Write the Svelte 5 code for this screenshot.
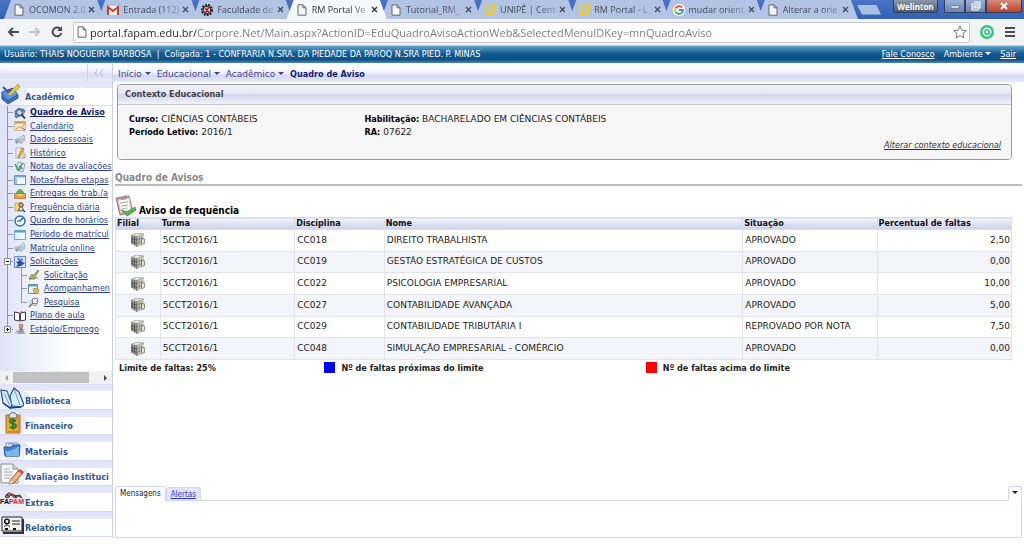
<script lang="ts">
	interface BrowserTab {
		icon: string;
		title: string;
	}

	interface MenuItem {
		icon: string;
		label: string;
		child?: boolean;
		last?: boolean;
		toggle?: 'open' | 'closed';
	}

	interface Row {
		turma: string;
		disciplina: string;
		nome: string;
		situacao: string;
		faltas: string;
	}

	const tabs: BrowserTab[] = [
		{ icon: 'page', title: 'OCOMON 2.0' },
		{ icon: 'gmail', title: 'Entrada (112)' },
		{ icon: 'gear', title: 'Faculdade de' },
		{ icon: 'page', title: 'RM Portal Ve' },
		{ icon: 'page', title: 'Tutorial_RM_' },
		{ icon: 'unipe', title: 'UNIPÊ | Cent' },
		{ icon: 'unipe', title: 'RM Portal - L' },
		{ icon: 'google', title: 'mudar orient' },
		{ icon: 'page', title: 'Alterar a orie' }
	];

	const menu: MenuItem[] = [
		{ icon: 'board', label: 'Quadro de Aviso' },
		{ icon: 'calendar', label: 'Calendário' },
		{ icon: 'people', label: 'Dados pessoais' },
		{ icon: 'history', label: 'Histórico' },
		{ icon: 'grades', label: 'Notas de avaliações' },
		{ icon: 'sheet', label: 'Notas/faltas etapas' },
		{ icon: 'tray', label: 'Entregas de trab./a' },
		{ icon: 'daily', label: 'Frequência diária' },
		{ icon: 'clock', label: 'Quadro de horários' },
		{ icon: 'window', label: 'Período de matrícul' },
		{ icon: 'people', label: 'Matrícula online' },
		{ icon: 'requests', label: 'Solicitações', toggle: 'open' },
		{ icon: 'pencil', label: 'Solicitação', child: true },
		{ icon: 'follow', label: 'Acompanhamen', child: true },
		{ icon: 'search', label: 'Pesquisa', child: true, last: true },
		{ icon: 'book', label: 'Plano de aula' },
		{ icon: 'person', label: 'Estágio/Emprego', toggle: 'closed', last: true }
	];

	const sections = [
		{ icon: 'library', label: 'Biblioteca' },
		{ icon: 'money', label: 'Financeiro' },
		{ icon: 'folder', label: 'Materiais' },
		{ icon: 'notes', label: 'Avaliação Instituci' },
		{ icon: 'fapam', label: 'Extras' },
		{ icon: 'report', label: 'Relatórios' }
	];

	const columns = ['Filial', 'Turma', 'Disciplina', 'Nome', 'Situação', 'Percentual de faltas'];

	const rows: Row[] = [
		{ turma: '5CCT2016/1', disciplina: 'CC018', nome: 'DIREITO TRABALHISTA', situacao: 'APROVADO', faltas: '2,50' },
		{ turma: '5CCT2016/1', disciplina: 'CC019', nome: 'GESTÃO ESTRATÉGICA DE CUSTOS', situacao: 'APROVADO', faltas: '0,00' },
		{ turma: '5CCT2016/1', disciplina: 'CC022', nome: 'PSICOLOGIA EMPRESARIAL', situacao: 'APROVADO', faltas: '10,00' },
		{ turma: '5CCT2016/1', disciplina: 'CC027', nome: 'CONTABILIDADE AVANÇADA', situacao: 'APROVADO', faltas: '5,00' },
		{ turma: '5CCT2016/1', disciplina: 'CC029', nome: 'CONTABILIDADE TRIBUTÁRIA I', situacao: 'REPROVADO POR NOTA', faltas: '7,50' },
		{ turma: '5CCT2016/1', disciplina: 'CC048', nome: 'SIMULAÇÃO EMPRESARIAL - COMÉRCIO', situacao: 'APROVADO', faltas: '0,00' }
	];

	// small icons, drawn on a 12x12 grid
	const small: Record<string, string> = {
		page: '<path d="M2 .8h5l3 3v7.4H2z" fill="#f4f6fa" stroke="#666" stroke-width="1"/><path d="M7 .8v3h3" fill="none" stroke="#666"/>',
		gmail: '<path d="M0 2h12v9H0z" fill="#f3f3f3"/><path d="M1 11V3l5 4 5-4v8" fill="none" stroke="#d23a31" stroke-width="2"/>',
		gear: '<circle cx="6" cy="6" r="5" fill="none" stroke="#222" stroke-width="2" stroke-dasharray="2 1"/><circle cx="6" cy="6" r="3.6" fill="#ddd" stroke="#222"/><path d="M4 9l2-3-2-2M6 6l2-3M6 6l2 3" stroke="#b52634" stroke-width="1.5" fill="none"/>',
		unipe: '<path d="M1 0h3v6q0 3 2 3t2-3V0h3v7q0 5-5 5T1 7z" fill="#e8cc38"/>',
		google: '<circle cx="6" cy="6" r="6" fill="#fff"/><path d="M9 3.5A4 4 0 0 0 2.6 4" stroke="#e94335" stroke-width="1.8" fill="none"/><path d="M2.6 4a4 4 0 0 0 0 4" stroke="#fbbc05" stroke-width="1.8" fill="none"/><path d="M2.6 8A4 4 0 0 0 8.6 9" stroke="#34a853" stroke-width="1.8" fill="none"/><path d="M6 6h4q0 2-1.4 3" stroke="#4285f4" stroke-width="1.8" fill="none"/>',
		board: '<path d="M1 4l4-3 5 2-1 5-5 2-3-2z" fill="#5c97c9" stroke="#31557f" stroke-width=".6"/><circle cx="5.5" cy="5.5" r="2.8" fill="#c8e4f4" stroke="#3c4650"/><path d="M7.5 7.5l3.5 4" stroke="#27323c" stroke-width="1.8"/><path d="M9 2l2 3M1 9l2 2" stroke="#3478a8" stroke-width="1.4"/><circle cx="9.7" cy="5.5" r="1.2" fill="#c88c58"/>',
		calendar: '<path d="M.5 1.5h11v9H.5z" fill="#f3e8ce" stroke="#bba984" stroke-width=".8"/><path d="M1 2.5h10" stroke="#d29757" stroke-width="2"/><path d="M2 9l3-2 2 1 4-4" stroke="#e0903d" fill="none"/><path d="M8 8l3 2" stroke="#c95443"/>',
		people: '<ellipse cx="3.5" cy="6.5" rx="3" ry="2.4" fill="#b5bdcb"/><circle cx="3" cy="8" r="1.5" fill="#8c99ad"/><path d="M5 4l5-3 1 5-4 4z" fill="#dce2ed" stroke="#99a4b5" stroke-width=".8"/><path d="M6 6l3-2M7 8l3-3" stroke="#7995bd" stroke-width=".8"/>',
		history: '<path d="M2 1h7v10H2z" fill="#fff" stroke="#8c9cbd" stroke-width=".8"/><path d="M3 4h4M3 8h5" stroke="#a9b9d7" stroke-width=".7"/><path d="M4 9l4-8 2 1-4 8-2 1z" fill="#efb72d" stroke="#9b6724" stroke-width=".6"/><path d="M9 11h2V6" stroke="#d28c4f" fill="none"/>',
		grades: '<path d="M4 1l7 2-2 8-6-2z" fill="#e5ecf5" stroke="#70889b" stroke-width=".7"/><path d="M1 3l3 6 5-7" stroke="#48a765" stroke-width="1.5" fill="none"/><path d="M5 5l3 2M5 9l4-2" stroke="#395c7f" stroke-width=".8"/>',
		sheet: '<path d="M.5 1.5h11v9H.5z" fill="#fff" stroke="#6690c0"/><path d="M1 2.5h10" stroke="#72aae1" stroke-width="2"/><path d="M2 4v6" stroke="#5783c9"/><path d="M4 4v6M7 4v6M9 4v6" stroke="#d3deed" stroke-width=".7"/>',
		tray: '<path d="M3 3q3-4 6 0l2 3H1z" fill="#66ad57"/><path d="M.5 5.5h11v5H.5z" fill="#e6a33d" stroke="#a36b2c" stroke-width=".7"/><path d="M3 7h6" stroke="#fff0bd"/>',
		daily: '<path d="M1 2h6v8H1z" fill="#f9dd61" stroke="#a3862f" stroke-width=".6"/><circle cx="7" cy="4" r="2.2" fill="#e2ac80" stroke="#7d392e"/><path d="M3 10q4-6 7 0" fill="#b95349"/><circle cx="7" cy="8" r="2" fill="#d4edf9" stroke="#58657d"/><path d="M9 9l2 2" stroke="#444" stroke-width="1.5"/>',
		clock: '<circle cx="6" cy="6" r="5" fill="#eaf8ff" stroke="#2b6fae" stroke-width="1.4"/><path d="M6 6l3-3M6 6H3" stroke="#183e73" stroke-width="1.2"/><path d="M6 1v1M11 6h-1M6 11v-1" stroke="#437daa"/>',
		window: '<path d="M.5 1.5h11v9H.5z" fill="#edf9ff" stroke="#70a8d0"/><path d="M1 2.5h10" stroke="#41a4d8" stroke-width="2"/><path d="M8 3h3" stroke="#ef9f58"/><path d="M3 5v5M6 5v5" stroke="#d5eafa"/>',
		requests: '<path d="M.5.5h11v11H.5z" fill="#dce8ff" stroke="#6185e4"/><path d="M3 2l6 1-1 3 3 1-4 3-5 1 2-3-2-2 3-1z" fill="#244ab5"/><path d="M5 3l3 2" stroke="#fff" stroke-width=".8"/>',
		pencil: '<path d="M1 10l3-5 1 2 5-6 1 1-5 7z" fill="#b2ba64" stroke="#6c7039" stroke-width=".7"/><path d="M1 10h6l1-2 2 2" stroke="#769648" fill="none"/>',
		follow: '<path d="M.5 1.5h9v9h-9z" fill="#f8fbff" stroke="#678eb9"/><path d="M1 2.5h8" stroke="#5f96cf" stroke-width="2"/><path d="M5 6l3-1 3 2-1 4-4-1z" fill="#e3bc4c" stroke="#877244" stroke-width=".6"/>',
		search: '<path d="M1 8l4-5 5 1-2 6z" fill="#eff0e7" stroke="#94958b" stroke-width=".6"/><circle cx="7" cy="5" r="3" fill="#eaf2f7" stroke="#6b756f"/><path d="M5 7l-4 4" stroke="#777b65" stroke-width="1.5"/>',
		book: '<path d="M.5 2l5 1v8l-5-1zM11.5 2l-5 1v8l5-1z" fill="#fff" stroke="#333b48"/><path d="M6 3v8" stroke="#a53c3c"/><path d="M4 2l2 2 2-3" stroke="#ad4242" fill="none"/>',
		person: '<circle cx="7" cy="3" r="2" fill="#d6a57b" stroke="#77523c" stroke-width=".6"/><path d="M4 11l1-6h4l2 6z" fill="#a0a7b5"/><path d="M1 10l3-3v4" fill="#c6cbd4" stroke="#858b99" stroke-width=".6"/><path d="M7 5v4" stroke="#b13b3b"/>',
		building: '<path d="M0 2l5 1v9l-5-3z" fill="#9b9f9a"/><path d="M5 3l6-2v8l-6 3z" fill="#d2cfc0"/><path d="M0 2l5-2 6 1-6 2z" fill="#e6e7e1" stroke="#777a72" stroke-width=".5"/><path d="M1 3v6M3 3v7M5 3v9M0 5l5 1M0 7l5 2" stroke="#4a504c" stroke-width=".7"/><path d="M7 3v8M9 3v6M5 6l5-2M5 9l5-2" stroke="#76776d" stroke-width=".6"/><path d="M9 5h2.500v4L9 10z" fill="#eee9d4" stroke="#5a5d57" stroke-width=".6"/>'
	};

	// section icons, drawn on a 24x22 grid
	const large: Record<string, string> = {
		academic: '<path d="M2 9l11-4 5 7-10 7-6-5z" fill="#4c82d3" stroke="#2450a0"/><path d="M2 13l6 5 10-6v3L8 21l-6-5z" fill="#3f6cc0" stroke="#315eaf"/><path d="M3 9l10-3 4 5-9 5z" fill="#5f96e4"/><path d="M8 11L18 1l2 3L10 13z" fill="#f2c52c" stroke="#a78424" stroke-width=".6"/><path d="M3 4l5 5 3-2" fill="none" stroke="#3258a5" stroke-width="2"/>',
		library: '<path d="M1 3l6 1 5 14-2 3L3 16zM14 1l5 4 5 13-3 2-9-1-2-10z" fill="#d9ecfb" stroke="#1f4e91" stroke-width="1.2"/><path d="M7 5l5 13M14 2l6 16M4 6l6 13" stroke="#6b9ed0" fill="none"/><path d="M3 16l7 5 11-1" fill="none" stroke="#173d7a" stroke-width="1.5"/>',
		money: '<path d="M6 3h14v18H6z" fill="#f0a52c" stroke="#a87123"/><path d="M9 3q4-5 8 0v3H9z" fill="#dce3ee" stroke="#59677c"/><path d="M18 5h2v16H8v-2h10z" fill="#d98724"/><path d="M16 9q-6-3-6 0 0 2 3 2.5t3 2.5q0 3-6 1M13 6.5v11" fill="none" stroke="#267b35" stroke-width="2"/>',
		folder: '<path d="M6 5h11l2 2v11H6z" fill="#f6f9ff" stroke="#7690bd"/><path d="M4 9h7l2-2h7l-1 11H5z" fill="#3f82d4" stroke="#20559c"/><path d="M5 13q7 1 14-5v10H6z" fill="#79b7ed"/><path d="M8 6h6" stroke="#558bc8"/>',
		notes: '<path d="M1 1h12l5 5v14H1z" fill="#f7f8f8" stroke="#888"/><path d="M13 1v5h5" fill="#ddd" stroke="#888"/><path d="M4 6h6M4 9h9M4 12h8M4 15h6" stroke="#a4a8ac"/><path d="M11 16L19 7l4 3-9 10-5 1z" fill="#eeb687" stroke="#8a533a"/><path d="M18 8l2-2 4 3-2 2z" fill="#ce4945"/><path d="M9 21l2-4 2 3z" fill="#f9e1bb"/>',
		report: '<path d="M2 3h20v14H2z" fill="#f2f2f2" stroke="#222"/><path d="M3 19h20V5" fill="none" stroke="#333" stroke-width="2"/><circle cx="7" cy="7.5" r="2.2" fill="#fff" stroke="#111" stroke-width="1.5"/><path d="M4 13q3-4 6 0M12 7h8M12 10h8" stroke="#222" fill="none"/><path d="M5 15h3M13 15h3" stroke="#111" stroke-width="2"/>'
	};

	let address = $state(
		'portal.fapam.edu.br/Corpore.Net/Main.aspx?ActionID=EduQuadroAvisoActionWeb&SelectedMenuIDKey=mnQuadroAviso'
	);
	let activeTab = $state(3);
	let panel = $state('Mensagens');
</script>

{#snippet smallIcon(name: string)}
	<svg class="icon" viewBox="0 0 12 12" aria-hidden="true">{@html small[name]}</svg>
{/snippet}

{#snippet largeIcon(name: string)}
	<svg class="icon-large" viewBox="0 0 24 22" aria-hidden="true">
		{#if name === 'fapam'}
			<path d="M5 8q3-6 7-3t8 1l2 3-4-2-3 2-4-3-3 3z" fill="#a77" stroke="#5d3431" />
			<path d="M6 5l4 3M13 5l4 4" stroke="#333" />
			<text x="0" y="15" class="logo-text">FA<tspan fill="#d22b35">PAM</tspan></text>
		{:else}
			{@html large[name]}
		{/if}
	</svg>
{/snippet}

<div class="page">
	<header class="browser">
		<div class="tab-strip">
			<div class="tabs">
				{#each tabs as tab, i}
					<div class="tab" class:active={i === activeTab}>
						<button class="tab-title" onclick={() => (activeTab = i)}>
							{@render smallIcon(tab.icon)}
							<span>{tab.title}</span>
						</button>
						<button class="tab-close" aria-label="Fechar guia">
							<svg viewBox="0 0 7 7"><path d="M1 1l5 5M6 1L1 6" stroke="currentColor" stroke-width="1.3" /></svg>
						</button>
					</div>
				{/each}
			</div>
			<button class="new-tab" aria-label="Nova guia"></button>
			<div class="window-controls">
				<button class="user">Welinton</button>
				<div class="window-buttons">
					<button aria-label="Minimizar"><svg viewBox="0 0 10 10"><path d="M1 5h8v2H1z" fill="#fff" stroke="#456" stroke-width=".5" /></svg></button>
					<button aria-label="Restaurar"><svg viewBox="0 0 10 10"><path d="M3 1h6v6H7M1 3h6v6H1zM3 5h2v2H3z" fill="none" stroke="#fff" stroke-width="1.2" /></svg></button>
					<button class="close" aria-label="Fechar"><svg viewBox="0 0 10 10"><path d="M2 2l6 6M8 2L2 8" stroke="#fff" stroke-width="2" /></svg></button>
				</div>
			</div>
		</div>

		<div class="toolbar">
			<button class="nav" aria-label="Voltar"><svg viewBox="0 0 12 12"><path d="M12 6H2M6 2L2 6l4 4" fill="none" stroke="#4c4c4c" stroke-width="2" /></svg></button>
			<button class="nav" aria-label="Avançar"><svg viewBox="0 0 12 12"><path d="M0 6h10M6 2l4 4-4 4" fill="none" stroke="#c6c6c6" stroke-width="2" /></svg></button>
			<button class="nav" aria-label="Recarregar"><svg viewBox="0 0 12 12"><path d="M10 4a4.4 4.4 0 1 0 .3 3" fill="none" stroke="#4c4c4c" stroke-width="2" /><path d="M11 0v5H6z" fill="#4c4c4c" /></svg></button>
			<div class="address">
				{@render smallIcon('page')}
				<input type="text" aria-label="Endereço" bind:value={address} />
				<button class="star" aria-label="Favoritos"><svg viewBox="0 0 14 14"><path d="M7 1l1.8 4.2 4.5.4-3.4 3 1 4.4L7 10.7 3.1 13l1-4.4-3.4-3 4.5-.4z" fill="none" stroke="#777" /></svg></button>
			</div>
			<button class="extension" aria-label="Extensão"><svg viewBox="0 0 14 14"><circle cx="7" cy="7" r="5.8" fill="#e9fff2" stroke="#36c37b" stroke-width="2.4" /><circle cx="7" cy="7" r="2.2" fill="none" stroke="#36c37b" stroke-width="1.5" /><path d="M9 5v4h2" stroke="#36c37b" fill="none" /></svg></button>
			<button class="nav" aria-label="Menu"><svg viewBox="0 0 12 12"><path d="M1 2h10M1 6h10M1 10h10" stroke="#4c4c4c" stroke-width="2" /></svg></button>
		</div>
	</header>

	<div class="user-bar">
		<span>Usuário: THAIS NOGUEIRA BARBOSA &nbsp;|&nbsp; Coligada: 1 - CONFRARIA N.SRA. DA PIEDADE DA PAROQ N.SRA PIED. P. MINAS</span>
		<nav>
			<a href="#contato">Fale Conosco</a>
			<button>Ambiente <i class="caret"></i></button>
			<a href="#sair">Sair</a>
		</nav>
	</div>

	<div class="body">
		<aside>
			<div class="collapse">
				<button aria-label="Recolher menu"><svg viewBox="0 0 10 8"><path d="M4 0L1 4l3 4M9 0L6 4l3 4" fill="none" stroke="#b9c2df" /></svg></button>
			</div>
			<h2 class="section">
				<a href="#academico">{@render largeIcon('academic')}<span>Acadêmico</span></a>
			</h2>
			<ul class="tree">
				{#each menu as item, i}
					<li>
						{#if item.child}
							<span class="guide through"></span>
						{/if}
						<span class="guide" class:end={item.last}>
							{#if item.toggle}
								<button class="toggle" aria-label={item.label}>
									<svg viewBox="0 0 7 7"><path d="M.5.5h6v6h-6z" fill="#fff" stroke="#8b8b94" /><path d={item.toggle === 'open' ? 'M2 3.5h3' : 'M2 3.5h3M3.5 2v3'} stroke="#000" /></svg>
								</button>
							{/if}
						</span>
						{@render smallIcon(item.icon)}
						<a href="#item-{i}" class:current={i === 0}>{item.label}</a>
					</li>
				{/each}
			</ul>
			<div class="scrollbar">
				<i class="arrow left"></i>
				<i class="thumb"></i>
				<i class="arrow right"></i>
			</div>
			<div class="sections">
				{#each sections as section}
					<h2 class="section">
						<a href="#{section.icon}">{@render largeIcon(section.icon)}<span>{section.label}</span></a>
					</h2>
				{/each}
			</div>
		</aside>

		<main>
			<nav class="breadcrumb">
				<a href="#inicio">Início <i class="caret"></i></a>
				<a href="#educacional">Educacional <i class="caret"></i></a>
				<a href="#academico">Acadêmico <i class="caret"></i></a>
				<b>Quadro de Aviso</b>
			</nav>

			<section class="context">
				<h3>Contexto Educacional</h3>
				<div class="context-body">
					<div class="fields">
						<p><b>Curso:</b> CIÊNCIAS CONTÁBEIS</p>
						<p><b>Habilitação:</b> BACHARELADO EM CIÊNCIAS CONTÁBEIS</p>
						<p><b>Período Letivo:</b> 2016/1</p>
						<p><b>RA:</b> 07622</p>
					</div>
					<a href="#contexto">Alterar contexto educacional</a>
				</div>
			</section>

			<h1>Quadro de Avisos</h1>

			<section class="notice">
				<h3>
					<svg viewBox="0 0 22 22" aria-hidden="true">
						<path d="M1 3l13-2 4 16-13 3z" fill="#d08c88" stroke="#b57370" />
						<path d="M3 5l11-2 2 12-10 3z" fill="#f7f7f7" stroke="#ccc" />
						<path d="M6 2l5-2 1 4-6 1z" fill="#999" />
						<path d="M5 8l8-1M6 11l7-1M7 14l5-1" stroke="#aaa" />
						<path d="M6 15l6 2 8-5 1 3-9 6z" fill="#58b84b" stroke="#4fa045" />
					</svg>
					Aviso de frequência
				</h3>
				<table>
					<thead>
						<tr>
							{#each columns as column}
								<th>{column}</th>
							{/each}
						</tr>
					</thead>
					<tbody>
						{#each rows as row}
							<tr>
								<td class="branch">{@render smallIcon('building')}</td>
								<td>{row.turma}</td>
								<td>{row.disciplina}</td>
								<td>{row.nome}</td>
								<td>{row.situacao}</td>
								<td class="number">{row.faltas}</td>
							</tr>
						{/each}
					</tbody>
				</table>
				<div class="legend">
					<span>Limite de faltas: 25%</span>
					<span><i class="swatch near"></i>Nº de faltas próximas do limite</span>
					<span><i class="swatch above"></i>Nº de faltas acima do limite</span>
				</div>
			</section>

			<section class="messages">
				<div class="message-tabs">
					{#each ['Mensagens', 'Alertas'] as name}
						<button class:selected={panel === name} onclick={() => (panel = name)}>{name}</button>
					{/each}
					<button class="selected fold" aria-label="Recolher mensagens"><i class="caret"></i></button>
				</div>
				<div class="message-body"></div>
			</section>
		</main>
	</div>
</div>

<style>
	:global(body) {
		background: #fff;
	}

	.page {
		display: flex;
		flex-direction: column;
		min-height: 100vh;
		font: 9px/13px 'DejaVu Sans', sans-serif;
		color: #222;
	}

	.page * {
		box-sizing: border-box;
	}

	button {
		padding: 0;
		border: 0;
		background: none;
		color: inherit;
		font: inherit;
		cursor: pointer;
	}

	h1,
	h2,
	h3,
	p,
	ul {
		margin: 0;
		padding: 0;
	}

	h1,
	h2,
	h3,
	b,
	th,
	.current,
	.legend {
		font-size: 9px;
		font-weight: bold;
	}

	h1,
	h2,
	h3,
	b,
	th,
	.legend,
	.tree,
	.user-bar,
	.context-body > a,
	.message-tabs {
		font-family: 'DejaVu Sans Condensed', 'DejaVu Sans', sans-serif;
	}

	svg {
		display: block;
		flex-shrink: 0;
	}

	.icon {
		width: 12px;
		height: 12px;
	}

	.icon-large {
		width: 24px;
		height: 22px;
	}

	.logo-text {
		font: bold 7px 'Liberation Sans', sans-serif;
	}

	.caret {
		display: inline-block;
		border: 3px solid transparent;
		border-top-color: currentColor;
		border-bottom: 0;
		vertical-align: 2px;
	}

	/* browser */
	.tab-strip {
		display: flex;
		height: 19px;
		padding-left: 4px;
		background: linear-gradient(#4a74c4, #3262b4);
		font-family: 'Open Sans', sans-serif;
	}

	.tabs {
		display: flex;
		flex: 0 1 848px;
		min-width: 0;
	}

	.tab {
		display: flex;
		flex: 1 1 0;
		align-items: center;
		min-width: 0;
		margin-right: -6px;
		padding: 0 9px;
		background: #b3c3e3;
		color: #444c5c;
		clip-path: polygon(7px 0, calc(100% - 7px) 0, 100% 100%, 0 100%);
	}

	.tab.active {
		z-index: 1;
		background: #f6f7f9;
		color: #333;
	}

	.tab-title {
		display: flex;
		flex: 1;
		align-items: center;
		gap: 4px;
		min-width: 0;
		text-align: left;
	}

	.tab-title span {
		flex: 1;
		white-space: nowrap;
		mask-image: linear-gradient(to right, #000 38px, transparent 64px);
	}

	.tab-close svg {
		width: 7px;
		height: 7px;
	}

	.new-tab {
		align-self: center;
		width: 24px;
		height: 10px;
		margin-left: 5px;
		background: #a9bfe6;
		clip-path: polygon(0 0, 80% 0, 100% 100%, 20% 100%);
	}

	.window-controls {
		display: flex;
		gap: 6px;
		height: 13px;
		margin-left: auto;
		padding-right: 2px;
	}

	.window-controls button {
		border: 1px solid #31415e;
		border-top: 0;
		background: linear-gradient(#9bb0d3, #6984b3);
	}

	.window-controls .user {
		width: 45px;
		border-radius: 0 0 3px 3px;
		background: linear-gradient(#8c97a9, #4d5a70);
		color: #fff;
		font-size: 8px;
		font-weight: bold;
		line-height: 11px;
	}

	.window-buttons {
		display: flex;
	}

	.window-buttons button {
		width: 21px;
		display: grid;
		place-items: center;
	}

	.window-buttons .close {
		width: 36px;
		border-radius: 0 0 3px 0;
		background: linear-gradient(#d48a78, #c0402a);
	}

	.window-buttons svg {
		width: 10px;
		height: 10px;
	}

	.toolbar {
		display: flex;
		align-items: center;
		gap: 10px;
		height: 27px;
		padding: 0 8px 0 7px;
		border-bottom: 1px solid #c8ccd2;
		background: #f2f3f4;
	}

	.nav svg {
		width: 12px;
		height: 12px;
	}

	.address {
		display: flex;
		flex: 1;
		align-items: center;
		gap: 2px;
		height: 21px;
		padding: 0 2px;
		border: 1px solid #c4c8cc;
		border-radius: 2px;
		background: #fff;
	}

	/* host in black, the rest of the address in grey */
	.address input {
		flex: 1;
		min-width: 0;
		padding: 0;
		border: 0;
		outline: none;
		background: linear-gradient(to right, #222 106px, #777 106px) text;
		color: transparent;
		font: 11px/19px 'Open Sans', sans-serif;
	}

	.star svg,
	.extension svg {
		width: 14px;
		height: 14px;
	}

	/* portal */
	.user-bar {
		display: flex;
		align-items: center;
		justify-content: space-between;
		height: 17px;
		padding: 0 8px 0 4px;
		background: linear-gradient(#62a5cf, #135a90 45%, #0d5287 80%, #4d87b1);
		color: #fff;
		white-space: nowrap;
	}

	.user-bar nav {
		display: flex;
		gap: 9px;
	}

	.user-bar a {
		color: inherit;
	}

	.body {
		display: flex;
		flex: 1;
		padding: 1px 0 8px;
	}

	aside {
		display: flex;
		flex-direction: column;
		width: 113px;
		flex-shrink: 0;
		overflow: hidden;
		border-right: 1px solid #c9cfe6;
	}

	.collapse {
		display: flex;
		justify-content: flex-end;
		height: 17px;
		background: linear-gradient(#fff, #f2f3fb 40%, #d9def0 60%, #e8ecfa);
	}

	.collapse button {
		width: 25px;
		padding-left: 6px;
		border-left: 1px solid #ccd2e8;
	}

	.collapse svg {
		width: 10px;
		height: 8px;
	}

	.section {
		height: 25px;
		border-bottom: 1px solid #d5daef;
		background:
			linear-gradient(#dfe3f5, #e6e9f8) 0 0 / 100% 7px no-repeat,
			linear-gradient(to top right, #e3e7f7 50%, transparent 50%) 24px 7px / 8px 8px no-repeat,
			linear-gradient(#e3e7f7, #f0f2fb) 0 0 / 24px 100% no-repeat;
	}

	.section a {
		display: flex;
		align-items: flex-end;
		gap: 1px;
		height: 100%;
		color: #30588f;
		text-decoration: none;
		white-space: nowrap;
	}

	.section span {
		padding-bottom: 1px;
	}

	.tree {
		display: grid;
		grid-auto-rows: 1fr;
		min-height: 230px;
		padding-bottom: 35px;
		box-sizing: content-box !important;
		background: linear-gradient(to right, #dfe3f6, #fff 70px);
		list-style: none;
	}

	.tree li {
		display: flex;
		align-items: center;
		min-height: 0;
		white-space: nowrap;
	}

	.tree .icon {
		margin-right: 4px;
	}

	.tree a {
		color: #2c3f8f;
	}

	.tree a.current {
		color: #10206b;
	}

	.guide {
		display: flex;
		align-items: center;
		flex-shrink: 0;
		align-self: stretch;
		width: 14px;
		padding-left: 4px;
		background:
			linear-gradient(#9298a8, #9298a8) 7px 0 / 1px 100% no-repeat,
			linear-gradient(#9298a8, #9298a8) 7px 50% / 6px 1px no-repeat;
	}

	.guide.end {
		background-size: 1px 50%, 6px 1px;
	}

	.guide.through {
		background-size: 1px 100%, 0 0;
	}

	.toggle svg {
		width: 7px;
		height: 7px;
	}

	.scrollbar {
		display: flex;
		align-items: center;
		height: 13px;
		background: #f1f1f1;
	}

	.thumb {
		width: 76px;
		height: 11px;
		background: #c1c1c1;
	}

	.arrow {
		border: 3px solid transparent;
	}

	.arrow.left {
		margin: 0 5px;
		border-right-color: #a3a3a3;
		border-left-width: 0;
	}

	.arrow.right {
		margin: 0 5px 0 auto;
		border-left-color: #444;
		border-right-width: 0;
	}

	.sections {
		display: grid;
		grid-auto-rows: 1fr;
		min-height: 153px;
	}

	.sections .section {
		height: auto;
	}

	main {
		display: flex;
		flex: 1;
		flex-direction: column;
		min-width: 0;
		padding: 3px 2px 0;
	}

	.breadcrumb {
		display: flex;
		gap: 6px;
		margin: 0 -2px;
		padding: 1px 5px;
		background: linear-gradient(#fff, #eef0fa 40%, #d3d8ee 60%, #e4e8fa);
		color: #101c70;
	}

	.breadcrumb a {
		color: #3b4590;
		text-decoration: none;
	}

	.context {
		margin: 2px 10px 0 2px;
		overflow: hidden;
		border: 1px solid #999;
		border-radius: 4px;
	}

	.context h3 {
		padding: 3px 7px;
		border-bottom: 1px solid #c8c8cc;
		background: linear-gradient(#f0f0f8, #e8e9f6 45%, #d2d4ea 50%, #f1f2fe);
		color: #444;
		font-size: 9px;
	}

	.context-body {
		display: flex;
		flex-direction: column;
		padding: 8px 10px 7px 11px;
		background: #f6f6f6;
	}

	.fields {
		display: grid;
		grid-template-columns: 27fr 73fr;
	}

	.fields b {
		color: #000;
	}

	.context-body a {
		align-self: flex-end;
		color: #333;
		font-style: italic;
	}

	h1 {
		margin-top: 12px;
		border-bottom: 2px solid #bbb;
		color: #888;
		font-size: 10px;
		line-height: 12px;
	}

	.notice {
		margin-right: 10px;
	}

	.notice h3 {
		display: flex;
		align-items: flex-end;
		gap: 2px;
		margin-top: 9px;
		color: #000;
		font-size: 10px;
	}

	.notice h3 svg {
		width: 22px;
		height: 22px;
	}

	table {
		width: 100%;
		height: 143px;
		table-layout: fixed;
		border-collapse: collapse;
	}

	th,
	td {
		padding: 0 2px;
		border: 1px solid #e2e4ea;
		text-align: left;
	}

	thead tr {
		height: 12px;
	}

	th {
		padding: 0 1px;
		border-color: #d9dcec;
		background: linear-gradient(#f4f5fb, #dfe2f1 50%, #ccd1e8);
		color: #111;
		line-height: 11px;
	}

	th:nth-child(1) {
		width: 5%;
	}

	th:nth-child(2),
	th:nth-child(5),
	th:nth-child(6) {
		width: 15%;
	}

	th:nth-child(3) {
		width: 10%;
	}

	tbody tr:nth-child(even) {
		background: #f4f5fb;
	}

	.branch .icon {
		width: 14px;
		height: 14px;
		margin: 0 auto;
	}

	td.number {
		padding-right: 1px;
		text-align: right;
	}

	.legend {
		display: grid;
		grid-template-columns: 23fr 36fr 41fr;
		margin-top: 2px;
		padding-left: 4px;
	}

	.legend span {
		display: flex;
		align-items: flex-end;
		gap: 6px;
	}

	.swatch {
		align-self: flex-start;
		width: 11px;
		height: 11px;
	}

	.swatch.near {
		background: #00f;
	}

	.swatch.above {
		background: #f00;
	}

	.messages {
		margin-top: auto;
	}

	.message-tabs {
		display: flex;
		align-items: flex-end;
		margin-bottom: -1px;
		font-size: 8px;
	}

	.message-tabs button {
		height: 14px;
		padding: 0 4px;
		border: 1px solid #d3d7ea;
		border-radius: 3px 3px 0 0;
		background: #e2e5f8;
		color: #2a3be0;
		text-decoration: underline;
	}

	.message-tabs .selected {
		height: 15px;
		border-bottom-color: #fff;
		background: #fff;
		color: #222;
		text-decoration: none;
	}

	.message-tabs .fold {
		margin-left: auto;
		padding: 0 3px;
		color: #1a1f6b;
	}

	.message-body {
		height: 38px;
		border: 1px solid #d3d7ea;
	}
</style>
